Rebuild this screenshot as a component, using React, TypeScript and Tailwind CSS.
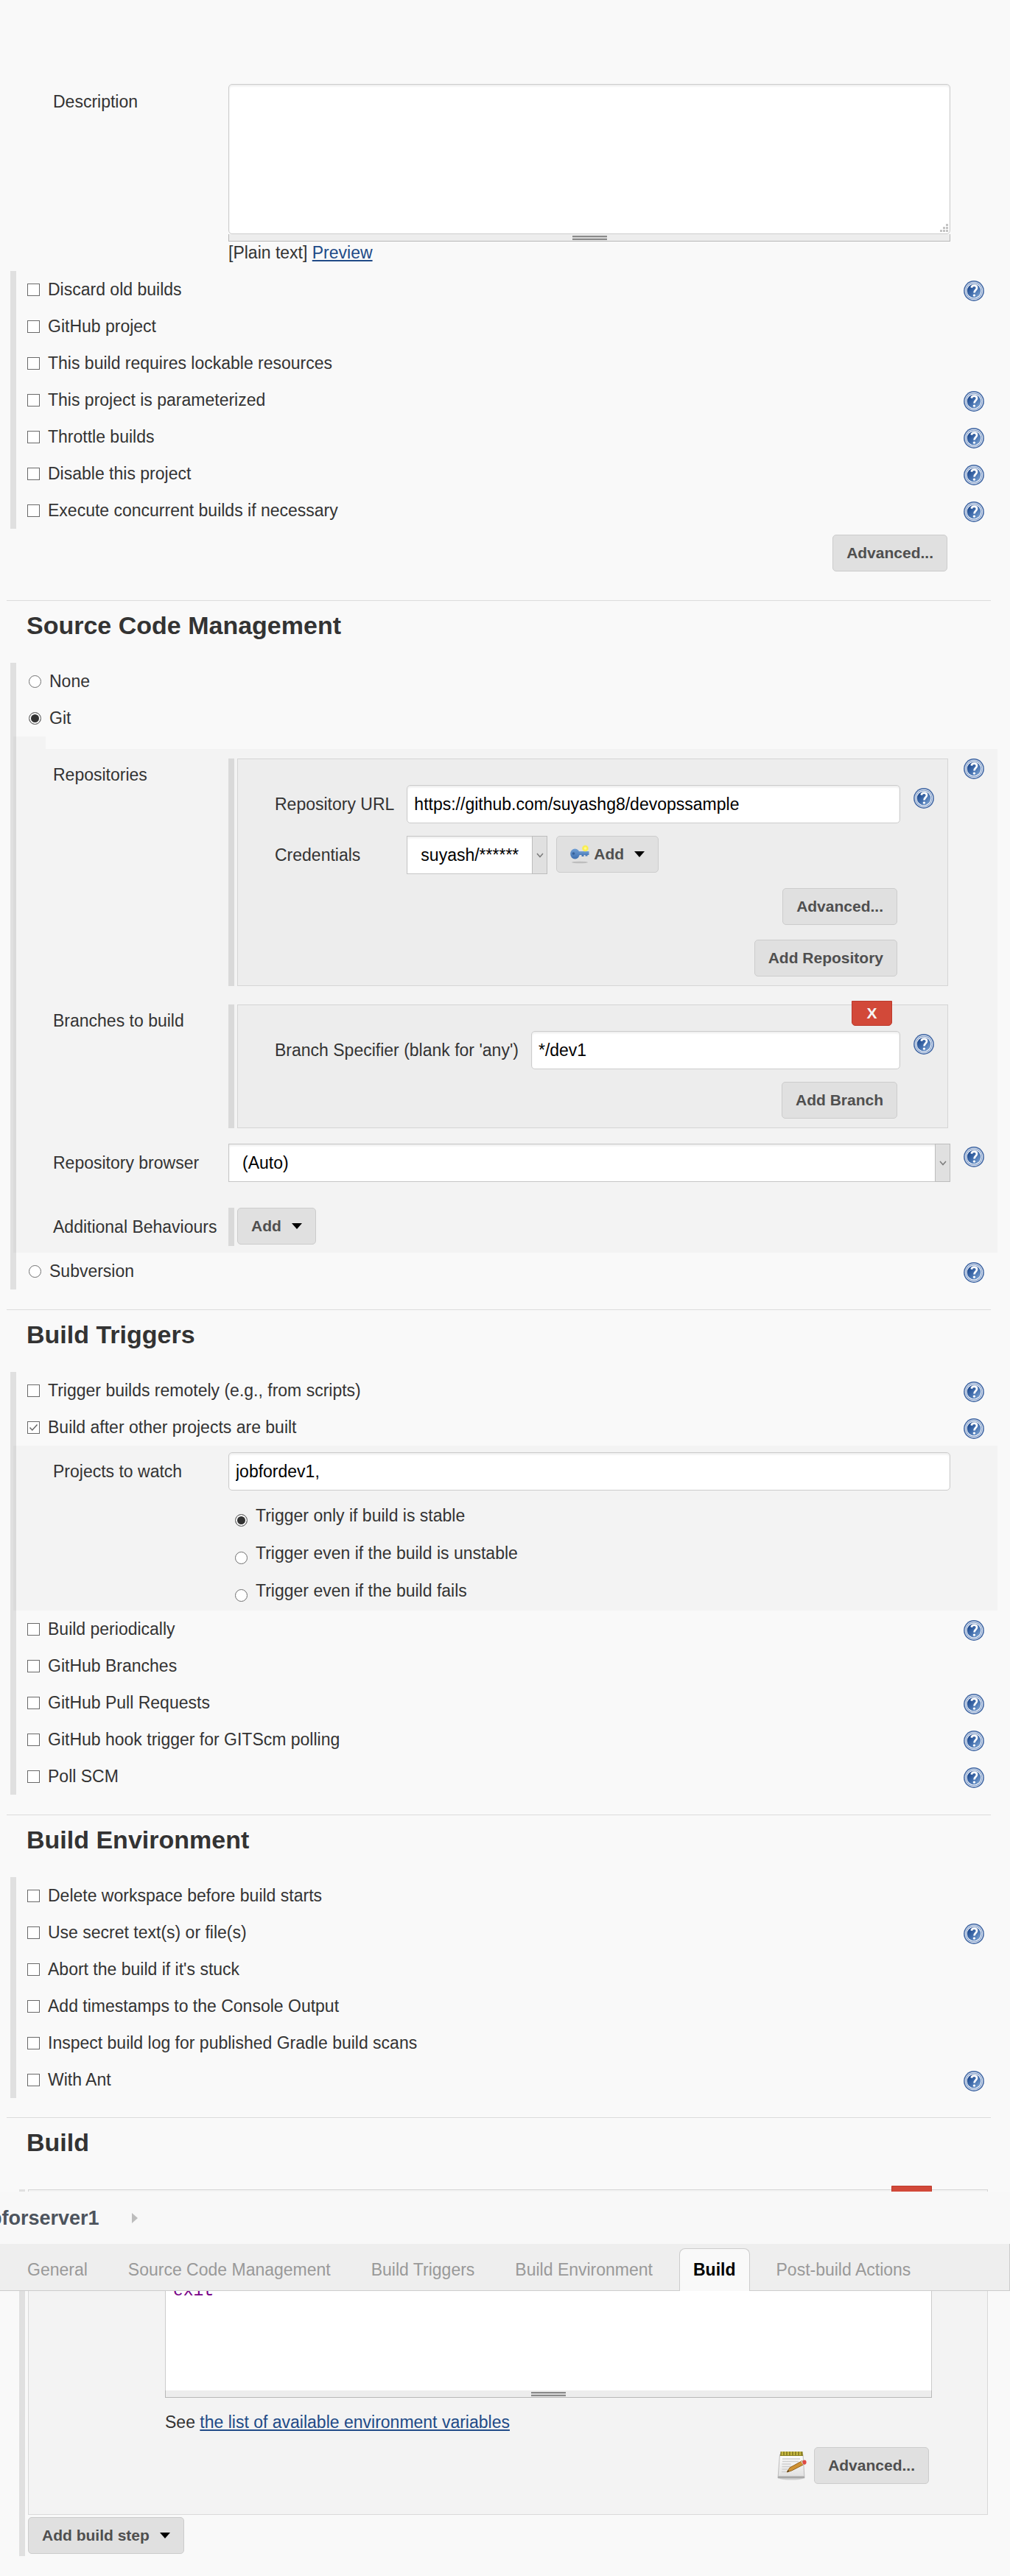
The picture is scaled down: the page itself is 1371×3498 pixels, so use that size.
import { useId, type ReactNode } from "react";

const text = "text-[23px] leading-7";

function HelpIcon() {
  return (
    <button type="button" aria-label="Help" className="block size-7 shrink-0">
      <svg viewBox="0 0 28 28" className="size-7" aria-hidden="true">
        <defs>
          <linearGradient id="help-disc" x1="0" y1="0" x2="1" y2="1">
            <stop offset="0.15" stopColor="#1f4a8e" />
            <stop offset="0.55" stopColor="#4672b0" />
            <stop offset="1" stopColor="#86abd8" />
          </linearGradient>
        </defs>
        <circle cx="14" cy="14" r="13.9" fill="#3f65a2" />
        <circle cx="14" cy="14" r="12.4" fill="#dbe4f2" />
        <circle cx="14" cy="14" r="11.2" fill="#6c8cbd" />
        <circle cx="14" cy="14" r="10.5" fill="#eef2f9" />
        <circle cx="14" cy="14" r="9.3" fill="url(#help-disc)" />
        <path
          d="M10.6 9.6c.5-2 1.9-2.9 3.7-2.9 2.2 0 3.7 1.3 3.7 3.2 0 2.7-3.5 3-3.5 6.6"
          fill="none"
          stroke="#fff"
          strokeWidth="2.7"
        />
        <circle cx="14.4" cy="20.1" r="1.7" fill="#fff" />
      </svg>
    </button>
  );
}

function Caret() {
  return (
    <svg viewBox="0 0 14 8" className="h-2 w-3.5" aria-hidden="true">
      <path d="M0 0h14L7 8z" fill="#000" />
    </svg>
  );
}

function KeyIcon() {
  return (
    <svg viewBox="0 0 26 26" className="size-[26px]" aria-hidden="true">
      <defs>
        <linearGradient id="key-body" x1="0" y1="0" x2="0" y2="1">
          <stop offset="0" stopColor="#6f9ed4" />
          <stop offset="1" stopColor="#3f70b0" />
        </linearGradient>
        <radialGradient id="key-spark">
          <stop offset="0" stopColor="#fffbb0" />
          <stop offset="0.6" stopColor="#fbee3a" />
          <stop offset="1" stopColor="#fbee3a" stopOpacity="0" />
        </radialGradient>
      </defs>
      <ellipse cx="13" cy="24" rx="11" ry="1.3" fill="#bdbdbd" />
      <path d="M10 9h15.500v5h-2v1.500h-3V14h-2v2h-3v-2h-5z" fill="url(#key-body)" />
      <ellipse cx="6.500" cy="12.500" rx="6.300" ry="7" fill="url(#key-body)" />
      <circle cx="4.500" cy="12" r="1.800" fill="#36619b" />
      <circle cx="20.500" cy="5" r="5" fill="url(#key-spark)" />
    </svg>
  );
}

function NotepadIcon() {
  return (
    <svg viewBox="0 0 40 40" className="size-10" aria-hidden="true">
      <defs>
        <linearGradient id="pad-paper" x1="0" y1="0" x2="0" y2="1">
          <stop offset="0" stopColor="#ffffff" />
          <stop offset="1" stopColor="#dedede" />
        </linearGradient>
      </defs>
      <ellipse cx="19" cy="37.500" rx="16" ry="2" fill="#cfcfcf" />
      <path d="M3.500 5h31.500l2 32H1z" fill="url(#pad-paper)" stroke="#bcbcbc" />
      <path d="M1.200 34.500h35.600l.2 2.500H1z" fill="#a8a8a8" />
      <path d="M4.500 1h30l.5 6h-31z" fill="#8f8428" />
      <path
        d="M7 1v5M11 1v5M15 1v5M19 1v5M23 1v5M27 1v5M31 1v5"
        stroke="#d9c94a"
        strokeWidth="1.500"
      />
      <path
        d="M7 11h24M7 14.500h22M6.500 18h12M6.500 21.500h18M6.500 25h8M6 28.500h6"
        stroke="#cfcfcf"
        strokeWidth="1.300"
      />
      <path d="M13 29l4-6L34 13.500l3 4.500-17.500 9z" fill="#cf9234" stroke="#94631c" />
      <path d="M13 29l1.800-2.800 1.800 1.500z" fill="#4b3a22" />
      <path d="M33 14l3 4.700" stroke="#d8d8d8" strokeWidth="1.600" />
      <ellipse cx="37" cy="15.500" rx="2.600" ry="3.100" fill="#df4a44" />
    </svg>
  );
}

function Button({ children }: { children: ReactNode }) {
  return (
    <button
      type="button"
      className="flex h-[50px] items-center rounded-[5px] border border-[#cccccc] bg-[#e0e0e0] px-[18px] text-[21px] leading-7 font-bold whitespace-nowrap text-[#4f4f4f]"
    >
      {children}
    </button>
  );
}

function DeleteButton() {
  return (
    <button
      type="button"
      aria-label="Delete"
      className="absolute -top-1.5 right-[75px] h-[34px] w-[55px] rounded-b-[5px] border border-[#bd3a2b] bg-[#d24939] text-[21px] leading-7 font-bold text-[#f5f5f5]"
    >
      X
    </button>
  );
}

function Radio({ name, label, checked, low }: { name: string; label: string; checked?: boolean; low?: boolean }) {
  const id = useId();
  return (
    <>
      <input
        id={id}
        type="radio"
        name={name}
        defaultChecked={checked}
        className={`size-[17px] shrink-0 appearance-none rounded-full border border-[#6f6f6f] bg-white shadow-[inset_0_0_0_2px_#ffffff] checked:bg-[#333333] ${low ? "mt-3.5" : ""}`}
      />
      <label htmlFor={id}>{label}</label>
    </>
  );
}

function CheckRow({ label, help, checked }: { label: string; help?: boolean; checked?: boolean }) {
  const id = useId();
  return (
    <div className="flex h-[50px] items-center pr-[18px] pl-[15px]">
      <div className="mr-[11px] grid size-[17px] shrink-0 place-items-center">
        <input
          id={id}
          type="checkbox"
          defaultChecked={checked}
          className="peer col-start-1 row-start-1 size-[17px] appearance-none border border-[#6a6a6a] bg-white"
        />
        <svg
          viewBox="0 0 13 13"
          className="pointer-events-none invisible col-start-1 row-start-1 size-[13px] peer-checked:visible"
          aria-hidden="true"
        >
          <path d="M1.500 6.500l3.300 3.500L11.500 2.500" fill="none" stroke="#666" strokeWidth="1.500" />
        </svg>
      </div>
      <label htmlFor={id}>{label}</label>
      {help && (
        <div className="mt-1 ml-auto">
          <HelpIcon />
        </div>
      )}
    </div>
  );
}

function RadioRow({ label, checked, help }: { label: string; checked?: boolean; help?: boolean }) {
  return (
    <div className="flex h-[50px] items-center gap-[11px] pr-[18px] pl-[17px]">
      <Radio name="scm" label={label} checked={checked} />
      {help && (
        <div className="mt-1 ml-auto">
          <HelpIcon />
        </div>
      )}
    </div>
  );
}

function HelpColumn({ children }: { children?: ReactNode }) {
  return <div className="w-16 shrink-0 pl-[18px]">{children}</div>;
}

function TextField({ id, value }: { id: string; value: string }) {
  return (
    <input
      id={id}
      type="text"
      defaultValue={value}
      className="h-[52px] w-full min-w-0 rounded-[5px] border border-[#cccccc] bg-white px-[9px] text-black shadow-[inset_0_2px_3px_rgba(0,0,0,0.08)]"
    />
  );
}

function SelectField({ id, value }: { id: string; value: string }) {
  return (
    <div className="relative w-full">
      <select
        id={id}
        className="block h-[52px] w-full appearance-none border border-[#c6c6c6] bg-white pr-[38px] pl-[18px] text-black shadow-[inset_0_2px_3px_rgba(0,0,0,0.08)]"
      >
        <option>{value}</option>
      </select>
      <span className="pointer-events-none absolute inset-y-0 right-0 flex w-[21px] items-center justify-center border border-[#bdbdbd] bg-[#e0e0e0]">
        <svg viewBox="0 0 10 7" className="h-[7px] w-2.5" aria-hidden="true">
          <path d="M1 1l4 4.500L9 1" fill="none" stroke="#7c7c7c" strokeWidth="1.500" />
        </svg>
      </span>
    </div>
  );
}

function Grip() {
  return (
    <div className="flex h-2.5 items-center justify-center border border-t-0 border-[#b8b8b8] bg-[#ededed]">
      <div className="h-1.5 w-[47px] border-y-2 border-[#8a8a8a] bg-[#d4d4d4]" />
    </div>
  );
}

function Title({ children }: { children: ReactNode }) {
  return (
    <>
      <hr className="mr-[26px] ml-[9px] border-t border-[#dcdcdc]" />
      <h2 className="mt-[13px] mb-[31px] ml-9 text-[34px] leading-10 font-bold">{children}</h2>
    </>
  );
}

function Group({ children }: { children: ReactNode }) {
  return <div className="mr-[17px] ml-3.5 border-l-8 border-[#e0e0e0]">{children}</div>;
}

function Repeatable({ children }: { children: ReactNode }) {
  return (
    <div className="mr-[3px] flex-1 border-l-8 border-[#d9d9d9] pl-1">
      <div className="relative border border-[#d5d5d5] bg-[#ededed] pt-[35px] pb-3 pl-[50px]">{children}</div>
    </div>
  );
}

const tabs = ["General", "Source Code Management", "Build Triggers", "Build Environment", "Build", "Post-build Actions"];

function StickyHeader() {
  return (
    <header className="relative z-10">
      <nav aria-label="Breadcrumb" className="flex h-[71px] items-center overflow-hidden bg-[#f8f8f8]">
        <a href="#job" className="-ml-[38px] text-[27px] leading-8 font-bold text-[#4d545d]">
          jobforserver1
        </a>
        <svg viewBox="0 0 8 14" className="ml-11 h-3.5 w-2" aria-hidden="true">
          <path d="M0 0l8 7-8 7z" fill="#bdbdbd" />
        </svg>
      </nav>
      <nav
        aria-label="Configuration sections"
        className="flex h-16 items-end gap-[17px] border-r border-b border-[#cccccc] bg-[#eeeeee] pl-[18px]"
      >
        {tabs.map((tab) =>
          tab === "Build" ? (
            <a
              key={tab}
              href="#build"
              aria-current="true"
              className="-mb-px h-[58px] rounded-t-lg border border-b-0 border-[#cccccc] bg-[#f9f9f9] px-[18px] pt-3.5 font-bold whitespace-nowrap text-black"
            >
              {tab}
            </a>
          ) : (
            <a key={tab} href="#section" className="h-[57px] px-[19px] pt-[15px] whitespace-nowrap text-[#999999]">
              {tab}
            </a>
          ),
        )}
      </nav>
    </header>
  );
}

export default function App() {
  return (
    <main
      className={`bg-[#f9f9f9] pt-[114px] pb-[27px] font-["Liberation_Sans",Arial,sans-serif] text-[#333333] ${text}`}
    >
      <div className="mr-[17px] flex pl-[72px]">
        <label htmlFor="description" className="w-[238px] shrink-0 pt-2.5">
          Description
        </label>
        <div className="flex-1">
          <div className="relative">
            <textarea
              id="description"
              className="block h-[204px] w-full resize-none rounded-[5px] border border-[#cccccc] bg-white p-2 shadow-[inset_0_2px_3px_rgba(0,0,0,0.08)]"
            />
            <svg viewBox="0 0 12 12" className="absolute right-0.5 bottom-0.5 size-3" aria-hidden="true">
              <path
                d="M8 0h3v3H8zM8 4h3v3H8zM8 8h3v3H8zM4 4h3v3H4zM4 8h3v3H4zM0 8h3v3H0z"
                fill="#c4c4c4"
              />
            </svg>
          </div>
          <Grip />
          <p className="mt-px">
            [Plain text]{" "}
            <a href="#preview" className="text-[#204a87] underline">
              Preview
            </a>
          </p>
        </div>
        <HelpColumn />
      </div>

      <div className="mt-[11px]">
        <Group>
          <CheckRow label="Discard old builds" help />
          <CheckRow label="GitHub project" />
          <CheckRow label="This build requires lockable resources" />
          <CheckRow label="This project is parameterized" help />
          <CheckRow label="Throttle builds" help />
          <CheckRow label="Disable this project" help />
          <CheckRow label="Execute concurrent builds if necessary" help />
        </Group>
      </div>
      <div className="mt-2 mr-[85px] mb-[39px] flex justify-end">
        <Button>Advanced...</Button>
      </div>

      <Title>Source Code Management</Title>
      <div className="mb-[27px]">
        <Group>
          <RadioRow label="None" />
          <RadioRow label="Git" checked />
          <div className="-ml-1 bg-black/[0.025] pb-[9px]">
            <div className="ml-11 h-[17px] bg-[#f9f9f9]" />
            <div className="mt-[13px] flex pl-[54px]">
              <div className="w-[238px] shrink-0 pt-2">Repositories</div>
              <Repeatable>
                <div className="grid grid-cols-[auto_1fr] items-center gap-x-[17px] gap-y-[17px]">
                  <label htmlFor="repo-url">Repository URL</label>
                  <div className="flex">
                    <TextField id="repo-url" value="https://github.com/suyashg8/devopssample" />
                    <HelpColumn>
                      <div className="mt-1">
                        <HelpIcon />
                      </div>
                    </HelpColumn>
                  </div>
                  <label htmlFor="credentials">Credentials</label>
                  <div className="flex gap-3">
                    <div>
                      <SelectField id="credentials" value="suyash/******" />
                    </div>
                    <Button>
                      <span className="flex items-center">
                        <KeyIcon />
                        <span className="mr-3.5 ml-1.5">Add</span>
                        <Caret />
                      </span>
                    </Button>
                  </div>
                </div>
                <div className="mt-[19px] mr-[68px] flex flex-col items-end gap-5">
                  <Button>Advanced...</Button>
                  <Button>Add Repository</Button>
                </div>
              </Repeatable>
              <HelpColumn>
                <HelpIcon />
              </HelpColumn>
            </div>

            <div className="mt-[25px] flex pl-[54px]">
              <div className="w-[238px] shrink-0 pt-2">Branches to build</div>
              <Repeatable>
                <DeleteButton />
                <div className="grid grid-cols-[auto_1fr] items-center gap-x-[17px]">
                  <label htmlFor="branch">Branch Specifier (blank for 'any')</label>
                  <div className="flex">
                    <TextField id="branch" value="*/dev1" />
                    <HelpColumn>
                      <div className="mt-1">
                        <HelpIcon />
                      </div>
                    </HelpColumn>
                  </div>
                </div>
                <div className="mt-[17px] mr-[68px] flex justify-end">
                  <Button>Add Branch</Button>
                </div>
              </Repeatable>
              <HelpColumn />
            </div>

            <div className="mt-[21px] flex pl-[54px]">
              <label htmlFor="browser" className="w-[238px] shrink-0 self-center">
                Repository browser
              </label>
              <div className="flex-1">
                <SelectField id="browser" value="(Auto)" />
              </div>
              <HelpColumn>
                <div className="mt-1">
                  <HelpIcon />
                </div>
              </HelpColumn>
            </div>

            <div className="mt-[35px] flex pl-[54px]">
              <div className="w-[238px] shrink-0 self-center whitespace-nowrap">Additional Behaviours</div>
              <div className="border-l-8 border-[#d9d9d9] pb-0.5 pl-1">
                <Button>
                  Add
                  <span className="ml-3.5">
                    <Caret />
                  </span>
                </Button>
              </div>
            </div>
          </div>
          <RadioRow label="Subversion" help />
        </Group>
      </div>

      <Title>Build Triggers</Title>
      <div className="mb-[27px]">
        <Group>
          <CheckRow label="Trigger builds remotely (e.g., from scripts)" help />
          <CheckRow label="Build after other projects are built" help checked />
          <div className="-ml-1 bg-black/[0.025] pt-[9px] pb-0.5">
            <div className="flex pl-[54px]">
              <label htmlFor="watch" className="w-[238px] shrink-0 self-center">
                Projects to watch
              </label>
              <div className="flex-1">
                <TextField id="watch" value="jobfordev1," />
              </div>
              <HelpColumn />
            </div>
            <div className="mt-2 pl-[301px]">
              <div className="flex h-[51px] items-center gap-[11px]">
                <Radio name="threshold" label="Trigger only if build is stable" checked low />
              </div>
              <div className="flex h-[51px] items-center gap-[11px]">
                <Radio name="threshold" label="Trigger even if the build is unstable" low />
              </div>
              <div className="flex h-[51px] items-center gap-[11px]">
                <Radio name="threshold" label="Trigger even if the build fails" low />
              </div>
            </div>
          </div>
          <CheckRow label="Build periodically" help />
          <CheckRow label="GitHub Branches" />
          <CheckRow label="GitHub Pull Requests" help />
          <CheckRow label="GitHub hook trigger for GITScm polling" help />
          <CheckRow label="Poll SCM" help />
        </Group>
      </div>

      <Title>Build Environment</Title>
      <div className="mb-[26px]">
        <Group>
          <CheckRow label="Delete workspace before build starts" />
          <CheckRow label="Use secret text(s) or file(s)" help />
          <CheckRow label="Abort the build if it's stuck" />
          <CheckRow label="Add timestamps to the Console Output" />
          <CheckRow label="Inspect build log for published Gradle build scans" />
          <CheckRow label="With Ant" help />
        </Group>
      </div>

      <Title>Build</Title>
      <div className="mr-[30px] ml-[26px] border-l-8 border-[#e0e0e0] bg-clip-content pl-1">
        <div className="h-[13px] -ml-3 bg-[#f9f9f9]" />
        <div className="relative h-[3px] border border-b-0 border-[#d5d5d5] bg-[#f3f3f3]">
          <DeleteButton />
        </div>
      </div>

      <StickyHeader />

      <div className="-mt-4 mr-[30px] ml-[26px] border-l-8 border-[#e0e0e0] pb-[3px] pl-1">
        <div className="border border-t-0 border-[#d9d9d9] bg-[#f3f3f3] pr-[75px] pb-[41px] pl-[185px]">
          <textarea
            aria-label="Command"
            defaultValue="exit"
            spellCheck={false}
            className='block h-[151px] w-full resize-none border-x border-[#cccccc] bg-white px-[10px] pt-[3px] font-["Liberation_Mono",monospace] leading-[26px] text-[#770088]'
          />
          <Grip />
          <p className="mt-[19px]">
            See{" "}
            <a href="#variables" className="text-[#204a87] underline">
              the list of available environment variables
            </a>
          </p>
          <div className="mt-5 mr-1 flex items-center justify-end gap-2.5">
            <NotepadIcon />
            <Button>Advanced...</Button>
          </div>
        </div>
        <div className="mt-[3px] flex">
          <Button>
            Add build step
            <span className="ml-3.5">
              <Caret />
            </span>
          </Button>
        </div>
      </div>
    </main>
  );
}
